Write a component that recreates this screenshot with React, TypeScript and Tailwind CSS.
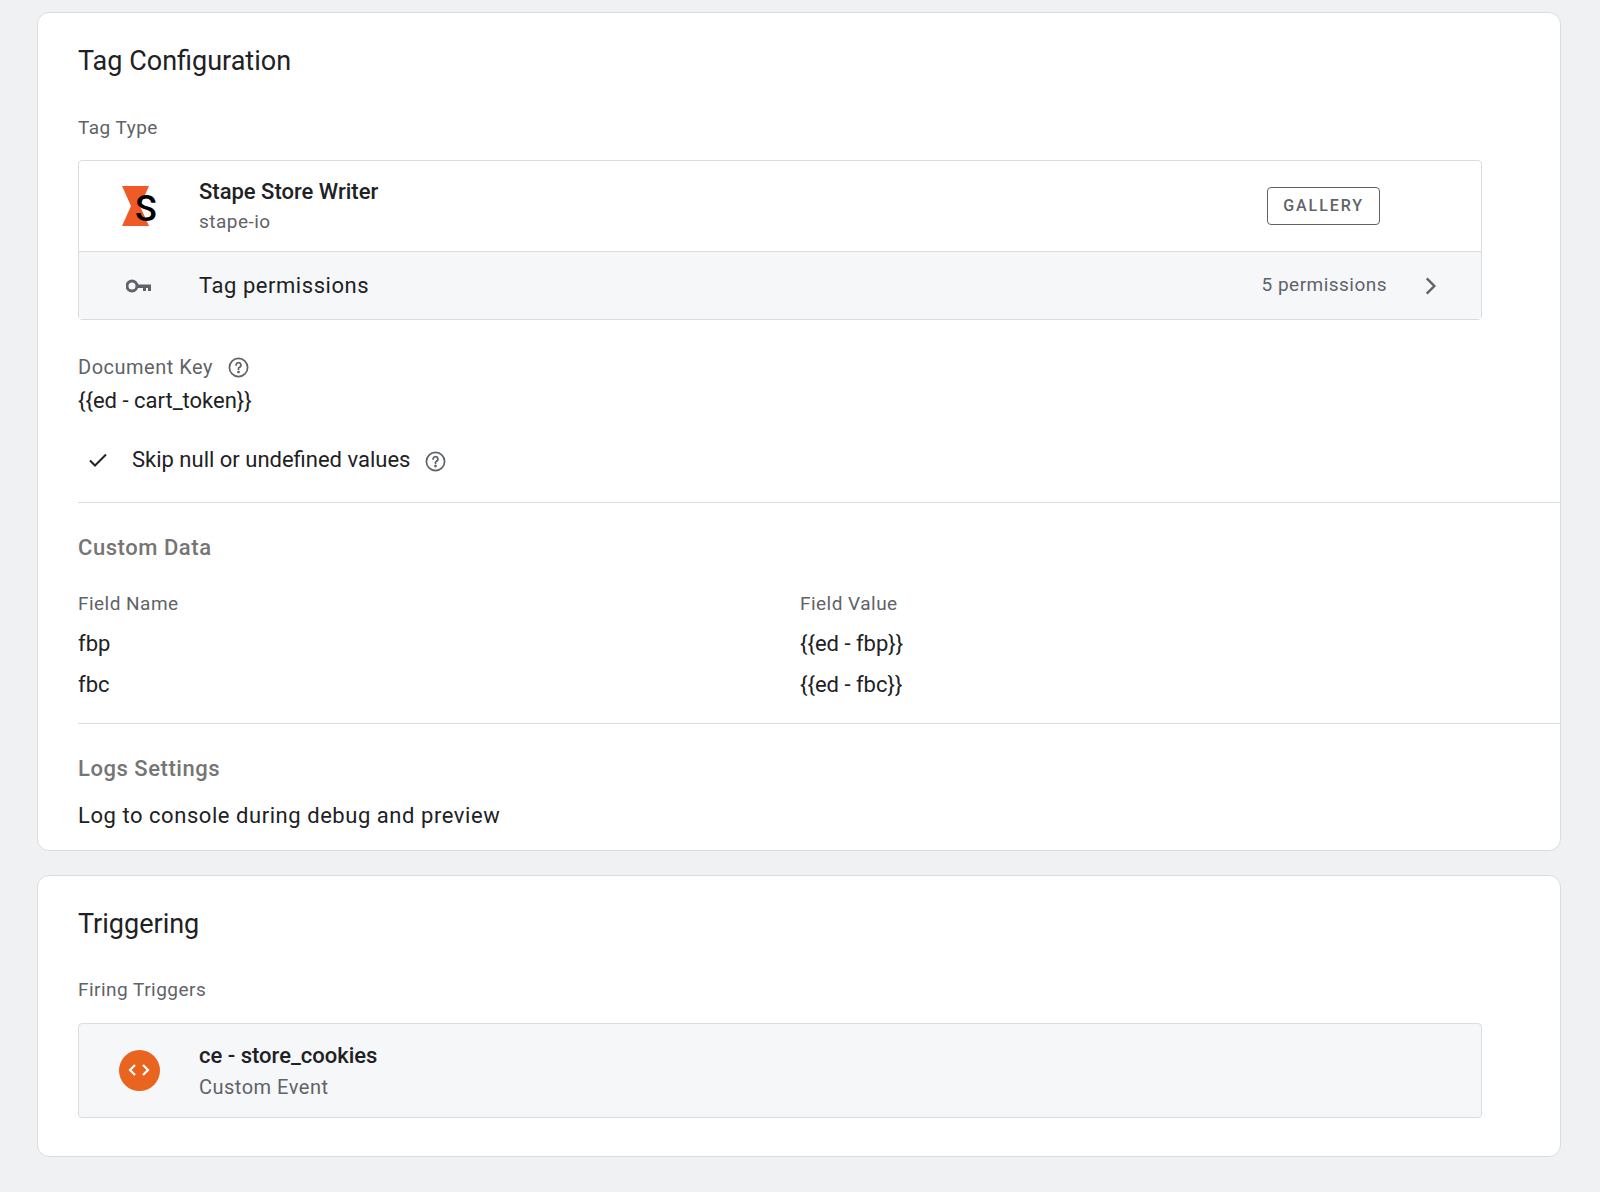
import React from "react";

const Help = () => (
  <svg width="23" height="23" viewBox="0 0 24 24" fill="none" stroke="#5f6368" strokeWidth="1.8">
    <circle cx="12" cy="12" r="9.5" />
    <path d="M9.5 9.5a2.5 2.5 0 1 1 3.5 2.3c-.7.3-1 .8-1 1.5v.7" strokeLinecap="round" />
    <circle cx="12" cy="16.8" r="0.6" fill="#5f6368" />
  </svg>
);

export default function App() {
  return (
    <div className="min-h-[1192px] w-[1600px] bg-[#f0f1f3] pt-3 pl-[37px] pb-10" style={{ fontFamily: "Roboto, 'Liberation Sans', sans-serif" }}>
      <div className="w-[1524px] rounded-xl border border-[#dadce0] bg-white">
        <div className="px-10 pt-[28px]">
          <div className="text-[27px] text-[#202124]">Tag Configuration</div>
          <div className="mt-[32px] text-[19px] tracking-wide text-[#5f6368]">Tag Type</div>
          <div className="mt-[18px] mr-[38px] rounded border border-[#dadce0]">
            <div className="flex h-[90px] items-center">
              <div className="flex w-[120px] justify-center">
                <svg width="40" height="44" viewBox="0 0 40 44">
                  <polygon points="3,2 30,2 21,22 30,42 3,42 12,22" fill="#f05a29" />
                  <text x="16" y="37" fontSize="36" fontWeight="500" fontFamily="Roboto, sans-serif" fill="#000">S</text>
                </svg>
              </div>
              <div className="flex-1">
                <div className="text-[22px] font-medium text-[#202124]">Stape Store Writer</div>
                <div className="text-[19px] tracking-wide text-[#5f6368]">stape-io</div>
              </div>
              <div className="mr-[101px] rounded border border-[#5f6368] px-[15px] py-[6px] text-[16px] font-medium tracking-[0.12em] text-[#5f6368]">GALLERY</div>
            </div>
            <div className="flex h-[68px] items-center border-t border-[#dadce0] bg-[#f6f7f9]">
              <div className="flex w-[120px] justify-center">
                <svg width="26" height="14" viewBox="0 0 26 14">
                  <circle cx="6" cy="7" r="5" fill="none" stroke="#5f6368" strokeWidth="3" />
                  <rect x="10" y="5.5" width="15" height="3.5" fill="#5f6368" />
                  <rect x="17" y="7" width="3" height="5" fill="#5f6368" />
                  <rect x="22" y="7" width="3" height="5" fill="#5f6368" />
                </svg>
              </div>
              <div className="flex-1 text-[22px] tracking-wide text-[#202124]">Tag permissions</div>
              <div className="text-[19px] tracking-wide text-[#5f6368]">5 permissions</div>
              <svg className="ml-[30px] mr-[38px]" width="26" height="26" viewBox="0 0 24 24" fill="none" stroke="#5f6368" strokeWidth="2.2"><path d="M9 5l7 7-7 7" /></svg>
            </div>
          </div>
          <div className="mt-[32px] flex items-center gap-[14px] text-[20px] tracking-wide text-[#5f6368]">Document Key <Help /></div>
          <div className="mt-[2px] text-[22px] text-[#202124]">{"{{ed - cart_token}}"}</div>
          <div className="mt-[26px] flex items-center pl-[8px] text-[22px] text-[#202124]">
            <svg width="24" height="24" viewBox="0 0 24 24" fill="none" stroke="#202124" strokeWidth="2"><path d="M4 12.5l5 5L20 6.5" /></svg>
            <span className="ml-[22px]">Skip null or undefined values</span>
            <span className="ml-[14px] mt-[4px]"><Help /></span>
          </div>
        </div>
        <div className="ml-10 mt-[26px] border-t border-[#dadce0]" />
        <div className="px-10 pt-[28px]">
          <div className="text-[22px] font-medium tracking-wide text-[#757575]">Custom Data</div>
          <div className="mt-[26px] grid grid-cols-[722px_1fr] gap-y-[8px] text-[22px] text-[#202124]">
            <div className="text-[19px] tracking-wide text-[#5f6368]">Field Name</div>
            <div className="text-[19px] tracking-wide text-[#5f6368]">Field Value</div>
            <div>fbp</div><div>{"{{ed - fbp}}"}</div>
            <div>fbc</div><div>{"{{ed - fbc}}"}</div>
          </div>
        </div>
        <div className="ml-10 mt-[22px] border-t border-[#dadce0]" />
        <div className="px-10 pt-[28px] pb-[18px]">
          <div className="text-[22px] font-medium tracking-wide text-[#757575]">Logs Settings</div>
          <div className="mt-[14px] text-[22px] tracking-wide text-[#202124]">Log to console during debug and preview</div>
        </div>
      </div>

      <div className="mt-[24px] w-[1524px] rounded-xl border border-[#dadce0] bg-white px-10 pt-[28px] pb-[38px]">
        <div className="text-[27px] text-[#202124]">Triggering</div>
        <div className="mt-[32px] text-[19px] tracking-wide text-[#5f6368]">Firing Triggers</div>
        <div className="mt-[18px] mr-[38px] flex h-[95px] items-center rounded border border-[#dadce0] bg-[#f6f7f9]">
          <div className="flex w-[120px] justify-center">
            <div className="flex h-[41px] w-[41px] items-center justify-center rounded-full bg-[#e8641f]">
              <svg width="22" height="14" viewBox="0 0 22 14" fill="none" stroke="white" strokeWidth="2.2"><path d="M7 2L2 7l5 5M15 2l5 5-5 5" /></svg>
            </div>
          </div>
          <div>
            <div className="text-[22px] font-medium text-[#202124]">ce - store_cookies</div>
            <div className="text-[20px] tracking-wide text-[#5f6368]">Custom Event</div>
          </div>
        </div>
      </div>
    </div>
  );
}
